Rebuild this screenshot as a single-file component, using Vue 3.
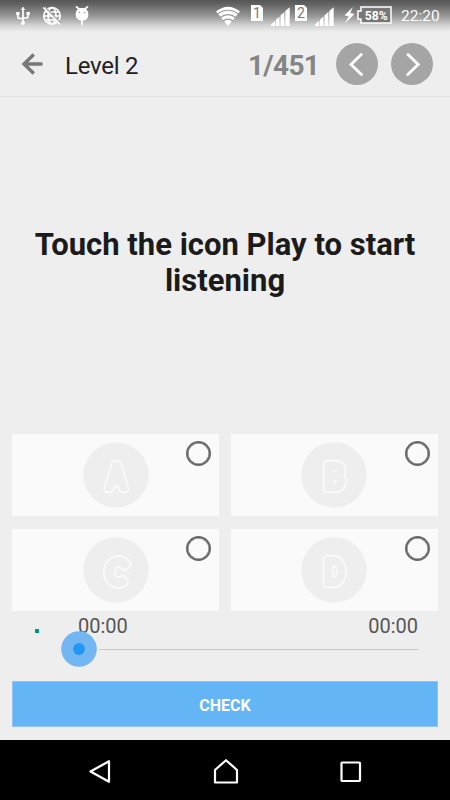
<script setup>
const answers = [
  { letter: 'A', scale: 0.78, tilt: 0 },
  { letter: 'B', scale: 0.88, tilt: 0 },
  { letter: 'C', scale: 0.92, tilt: 10 },
  { letter: 'D', scale: 0.77, tilt: 0 },
]
</script>

<template>
  <div class="screen">
    <header class="status">
      <div class="status-left">
        <svg class="usb" width="14" height="20" viewBox="0 0 14 20">
          <path d="M7 2V17M1.8 8V10.5Q1.8 12.5 4 12.5H7M12.2 7V9.5Q12.2 12 10 12H7" fill="none" stroke="#fff" stroke-width="1.7" />
          <path d="M4.8 4L7 .5 9.2 4ZM.2 6H3.5V9H.2ZM10.5 6H13.8V9H10.5Z" fill="#fff" />
          <circle cx="7" cy="17" r="2" fill="#fff" />
        </svg>
        <svg class="globe" width="20" height="20" viewBox="0 0 20 20">
          <g fill="none" stroke="#fff" stroke-width="1.7">
            <circle cx="10" cy="9.8" r="8.2" />
            <ellipse cx="10" cy="9.8" rx="3.9" ry="8.2" />
            <path d="M2 10H18M3.3 6H16.7M3.3 14H16.7" />
          </g>
          <path d="M2.8 1L19 17.2" stroke="#aaa" stroke-width="1.6" />
          <path d="M1.3 1.5L18 18.3" stroke="#fff" stroke-width="1.7" />
        </svg>
        <svg class="bug" width="14" height="20" viewBox="0 0 14 20">
          <path d="M1.5 .8L4 3M12.5 .8L10 3M7 13V18.5" stroke="#fff" stroke-width="1.7" stroke-linecap="round" />
          <path d="M.7 8.5C.7 4.5 3 2 7 2S13.3 4.5 13.3 8.5 11 14.5 7 14.5.7 12 .7 8.5Z" fill="#fff" />
          <circle cx="4.4" cy="6.5" r=".8" fill="#999" /><circle cx="9.6" cy="6.5" r=".8" fill="#999" />
        </svg>
      </div>
      <div class="status-right">
        <svg class="wifi" width="26" height="20" viewBox="0 0 26 20">
          <path d="M13 20L1 5.5Q13-4 25 5.5Z" fill="#fff" />
          <path d="M2 8.2Q13 .3 24 8.2M5 11.7Q13 5.4 21 11.7M8 15.2Q13 11 18 15.2" fill="none" stroke="#999" stroke-width="1.2" />
        </svg>
        <span class="sim">1</span>
        <svg class="signal" width="19" height="19" viewBox="0 0 19 19">
          <path d="M0 19V17.5L4 13.8V19ZM4.8 19V13L8.5 9.5V19ZM9.5 19V8.6L13.4 5V19ZM14.3 19V4L18.7 .2V19Z" fill="#fff" />
        </svg>
        <span class="sim second">2</span>
        <svg class="signal" width="19" height="19" viewBox="0 0 19 19">
          <path d="M0 19V17.5L4 13.8V19ZM4.8 19V13L8.5 9.5V19ZM9.5 19V8.6L13.4 5V19ZM14.3 19V4L18.7 .2V19Z" fill="#fff" />
        </svg>
        <svg class="bolt" width="11" height="17" viewBox="0 0 11 17">
          <path d="M9 0L.5 8.2 4.7 9.5 1 16.5 10.5 7 6.2 6Z" fill="#fff" />
        </svg>
        <svg class="battery" width="35" height="18" viewBox="0 0 35 18">
          <path d="M4 1H34V17H4V13H1V5H4Z" fill="#777" stroke="#fff" stroke-width="1.5" />
          <text x="19.2" y="13.6" text-anchor="middle" textLength="23" lengthAdjust="spacingAndGlyphs">58%</text>
        </svg>
        <span class="clock">22:20</span>
      </div>
    </header>

    <nav class="toolbar">
      <svg class="back" width="22" height="22" viewBox="0 0 22 22">
        <path d="M12.8 1.5L3 11L12.8 20.5M3 11H21.5" fill="none" stroke="#777" stroke-width="3.4" />
      </svg>
      <span class="level">Level 2</span>
      <span class="count">1/451</span>
      <svg class="circle" width="42" height="42" viewBox="0 0 42 42">
        <circle cx="21" cy="21" r="21" fill="#a5a5a5" />
        <path d="M25.2 11.5L15 21.5L25.5 31.5" fill="none" stroke="#fff" stroke-width="2.9" stroke-linecap="round" />
      </svg>
      <svg class="circle next" width="42" height="42" viewBox="0 0 42 42">
        <circle cx="21" cy="21" r="21" fill="#a5a5a5" />
        <path d="M17 11.5L27.2 21.5L16.7 31.5" fill="none" stroke="#fff" stroke-width="2.9" stroke-linecap="round" />
      </svg>
    </nav>

    <main class="question">
      <h1>Touch the icon Play to start<br />listening</h1>
    </main>

    <section class="answers">
      <div v-for="a in answers" :key="a.letter" class="card">
        <svg class="badge" width="66" height="66" viewBox="0 0 66 66">
          <circle cx="33" cy="33" r="32.7" fill="#eee" />
          <g :transform="`translate(33.2 46.8) scale(${a.scale} 1) rotate(${a.tilt} 0 -12)`" class="glyph">
            <text class="rim" text-anchor="middle">{{ a.letter }}</text>
            <text class="body" text-anchor="middle">{{ a.letter }}</text>
          </g>
        </svg>
        <i class="radio"></i>
      </div>
    </section>

    <section class="player">
      <i class="marker"></i>
      <div class="timeline">
        <div class="times"><span>00:00</span><span>00:00</span></div>
        <div class="track">
          <svg class="thumb" width="36" height="36" viewBox="0 0 36 36">
            <circle cx="18" cy="18" r="17.8" fill="#72b7f1" />
            <circle cx="18" cy="18" r="5.9" fill="#2196f3" />
          </svg>
          <i class="line"></i>
        </div>
      </div>
    </section>

    <button class="check">CHECK</button>

    <footer class="system">
      <svg width="22" height="26" viewBox="0 0 22 26"><path d="M20 2.2V22.8L1.5 12.5Z" fill="none" stroke="#fff" stroke-width="2.2" stroke-linejoin="round" /></svg>
      <svg width="26" height="26" viewBox="0 0 26 26"><path d="M2 23.5V11L13 1.2 24 11V23.5Z" fill="none" stroke="#fff" stroke-width="2.2" stroke-linejoin="round" /></svg>
      <svg width="22" height="22" viewBox="0 0 22 22"><rect x="1.5" y="1.5" width="18.5" height="18.5" rx=".7" fill="none" stroke="#fff" stroke-width="2.2" /></svg>
    </footer>
  </div>
</template>

<style>
body { margin: 0; }
</style>

<style scoped>
.screen {
  width: 450px;
  height: 800px;
  overflow: hidden;
  display: flex;
  flex-direction: column;
  background: #eee;
  font-family: Roboto, sans-serif;
}
svg { display: block; flex: none; }
.status {
  height: 32px;
  flex: none;
  display: flex;
  justify-content: space-between;
  background: linear-gradient(#555 0, #626262 4px, #969696 16px, #d0d0d0 25px, #eee 32px);
}
.status-left, .status-right { display: flex; align-items: flex-start; }
.usb { margin: 6px 0 0 16px; }
.globe { margin: 6px 0 0 12px; }
.bug { margin: 6px 0 0 13px; }
.wifi { margin: 6px 10px 0 0; }
.sim {
  width: 12px;
  height: 16px;
  margin-top: 5px;
  background: #fff;
  clip-path: polygon(0 0, 9px 0, 100% 3px, 100% 100%, 0 100%);
  color: #777;
  font-size: 14px;
  line-height: 17px;
  text-align: center;
}
.signal { margin: 7px 0 0 8px; }
.second { margin-left: 5px; }
.bolt { margin: 7px 0 0 10px; }
.battery { margin: 6px 0 0 2px; }
.battery text { fill: #fff; font: 700 13px Roboto, sans-serif; }
.clock {
  margin: 6px 10px 0 9px;
  width: 39px;
  color: #fff;
  font-size: 15.5px;
  line-height: 20px;
}
.toolbar {
  box-sizing: border-box;
  height: 65px;
  flex: none;
  display: flex;
  align-items: center;
  border-bottom: 1px solid #e2e2e2;
}
.back { margin-left: 21px; }
.level { margin: 4px 0 0 22px; width: 183px; font-size: 24px; letter-spacing: -.25px; color: #212121; }
.count { margin-top: 2px; width: 88px; font-size: 28px; font-weight: 700; letter-spacing: -.7px; color: #858585; }
.next { margin-left: 13px; }
.question {
  flex: 1;
  display: flex;
  align-items: center;
  justify-content: center;
  padding-bottom: 6px;
}
h1 {
  margin: 0;
  text-align: center;
  font-size: 31px;
  line-height: 36px;
  font-weight: 700;
  color: #1b1b1b;
  white-space: nowrap;
}
.answers {
  flex: none;
  height: 177px;
  margin: 0 12.5px 0 12.4px;
  display: grid;
  grid-template-columns: 1fr 1fr;
  grid-template-rows: 1fr 1fr;
  gap: 13px 12.5px;
}
.card {
  position: relative;
  background: #fafafa;
  display: flex;
  align-items: center;
  justify-content: center;
}
.glyph text { font: 900 34px Lato, sans-serif; stroke-linejoin: round; }
.rim { fill: #fafafa; stroke: #fafafa; stroke-width: 8.6px; }
.body { fill: #eee; stroke: #eee; stroke-width: 4.4px; }
.radio {
  position: absolute;
  top: 7px;
  right: 7.5px;
  box-sizing: border-box;
  width: 25px;
  height: 25px;
  border: 2.5px solid #696969;
  border-radius: 50%;
}
.radio::after {
  content: '';
  display: block;
  height: 100%;
  border-radius: 50%;
  box-shadow: inset 0 0 0 .5px #696969;
}
.player { flex: none; height: 70px; display: flex; }
.marker { flex: none; width: 4px; height: 4px; margin: 18px 0 0 35px; background: #009688; }
.timeline { flex: 1; margin: 0 32px 0 22px; }
.times {
  display: flex;
  justify-content: space-between;
  height: 20px;
  padding-left: 17px;
  font-size: 20px;
  line-height: 31px;
  color: #555;
}
.track { display: flex; align-items: center; height: 36px; }
.line { flex: 1; height: 1px; margin-left: 2px; background: #c8c8c8; }
.check {
  flex: none;
  height: 46px;
  margin: 0 12.5px 13px 12.4px;
  padding: 2px 0 0;
  border: 1px solid #8dc4f3;
  border-radius: 0;
  background: #64b5f6;
  color: #fff;
  font: 700 16px Roboto, sans-serif;
}
.system {
  box-sizing: border-box;
  flex: none;
  height: 60px;
  padding: 3px 88px 0 89px;
  display: flex;
  align-items: center;
  justify-content: space-between;
  background: #000;
}
</style>
